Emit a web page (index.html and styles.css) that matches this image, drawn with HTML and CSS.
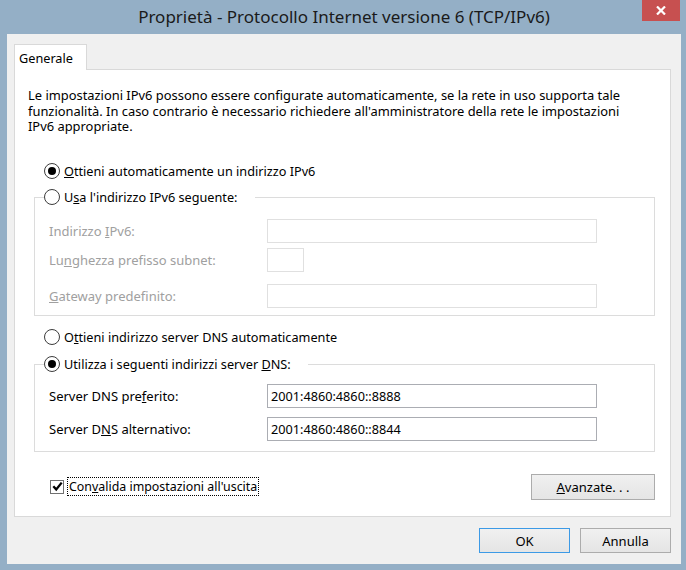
FILE: index.html
```html
<!DOCTYPE html>
<html lang="it">
<head>
  <meta charset="UTF-8">
  <title>Proprietà - Protocollo Internet versione 6 (TCP/IPv6)</title>
  <link rel="stylesheet" href="styles.css">
</head>
<body>

  <div class="window">
    <div class="titlebar">
      <span class="title">Proprietà - Protocollo Internet versione 6 (TCP/IPv6)</span>
      <span class="close">
        <svg width="10" height="9" viewBox="0 0 10 9">
          <path d="M1 0.5 L9 8.5 M9 0.5 L1 8.5" stroke="#fff" stroke-width="2.2" fill="none"/>
        </svg>
      </span>
    </div>

    <div class="client">
      <div class="tabs">
        <span class="tab">Generale</span>
      </div>

      <div class="panel">
        <p class="intro">
          Le impostazioni IPv6 possono essere configurate automaticamente, se la rete in uso supporta tale<br>
          funzionalità. In caso contrario è necessario richiedere all'amministratore della rete le impostazioni<br>
          IPv6 appropriate.
        </p>

        <div class="option option-top">
          <span class="radio checked"></span>
          <span><u>O</u>ttieni automaticamente un indirizzo IPv6</span>
        </div>

        <div class="group group-ip">
          <div class="group-head">
            <span class="radio"></span>
            <span>U<u>s</u>a l'indirizzo IPv6 seguente:</span>
          </div>
          <div class="field field-1">
            <span class="label disabled">Indirizzo <u>I</u>Pv6:</span>
            <span class="input disabled"></span>
          </div>
          <div class="field field-2">
            <span class="label disabled">Lu<u>n</u>ghezza prefisso subnet:</span>
            <span class="input disabled small"></span>
          </div>
          <div class="field field-3">
            <span class="label disabled"><u>G</u>ateway predefinito:</span>
            <span class="input disabled"></span>
          </div>
        </div>

        <div class="option option-dns">
          <span class="radio"></span>
          <span>O<u>t</u>tieni indirizzo server DNS automaticamente</span>
        </div>

        <div class="group group-dns">
          <div class="group-head">
            <span class="radio checked"></span>
            <span>Utilizza i seguenti indirizzi server <u>D</u>NS:</span>
          </div>
          <div class="field field-dns1">
            <span class="label">Server DNS pre<u>f</u>erito:</span>
            <span class="input">2001:4860:4860::8888</span>
          </div>
          <div class="field field-dns2">
            <span class="label">Server D<u>N</u>S alternativo:</span>
            <span class="input">2001:4860:4860::8844</span>
          </div>
        </div>

        <div class="bottom-row">
          <span class="check">
            <span class="box">
              <svg width="11" height="11" viewBox="0 0 11 11">
                <path d="M1.3 5.3 L4.2 8.4 L9.7 1.6" stroke="#000" stroke-width="2.3" fill="none"/>
              </svg>
            </span>
            <span class="check-label">Con<u>v</u>alida impostazioni all'uscita</span>
          </span>
          <button class="btn btn-wide"><u>A</u>vanzate. . .</button>
        </div>
      </div>

      <div class="footer">
        <button class="btn default">OK</button>
        <button class="btn">Annulla</button>
      </div>
    </div>
  </div>

</body>
</html>
```

FILE: styles.css
```css
body {
  margin: 0;
  font-family: "Segoe UI", "Noto Sans", sans-serif;
  font-size: 12.7px;
  color: #000;
}

.window {
  width: 686px;
  height: 570px;
  background-color: #94afc6;
  box-sizing: border-box;
  padding: 0 5px 0 7px;
}

.titlebar {
  position: relative;
  height: 34px;
  display: flex;
  align-items: center;
  justify-content: center;
}

.title {
  font-size: 17px;
  color: #1a1a1a;
  margin-top: -1px;
}

.close {
  position: absolute;
  top: 0;
  right: 1px;
  width: 38px;
  height: 21px;
  background-color: #c75050;
  display: flex;
  align-items: center;
  justify-content: center;
}

.client {
  height: 530px;
  background-color: #f0f0f0;
  box-sizing: border-box;
  padding: 10px 10px 0 7px;
}

.tabs {
  display: flex;
  height: 25px;
}

.tab {
  display: flex;
  align-items: center;
  box-sizing: border-box;
  width: 73px;
  height: 26px;
  padding-left: 4px;
  background: #fff;
  border: 1px solid #d9d9d9;
  border-bottom: none;
  position: relative;
  z-index: 1;
}

.panel {
  background: #fff;
  border: 1px solid #d9d9d9;
  height: 448px;
  box-sizing: border-box;
  padding: 0 15px 0 13px;
}

.intro {
  margin: 18px 0 0;
  font-size: 12.9px;
  line-height: 15.5px;
}

.option,
.group-head {
  display: flex;
  align-items: center;
  height: 16px;
}

.option {
  margin-left: 16px;
}

.option-top {
  margin-top: 28px;
}

.option-dns {
  margin-top: 13px;
}

.radio {
  width: 14px;
  height: 14px;
  border: 1px solid #3c3c3c;
  border-radius: 50%;
  background: #fff;
  margin-right: 4px;
  display: flex;
  align-items: center;
  justify-content: center;
}

.radio.checked::after {
  content: "";
  width: 8px;
  height: 8px;
  border-radius: 50%;
  background: #000;
}

.group {
  border: 1px solid #dcdcdc;
  margin-left: 6px;
  padding-left: 14px;
}

.group-ip {
  margin-top: 18px;
  padding-bottom: 7px;
}

.group-dns {
  margin-top: 19px;
  padding-bottom: 10px;
}

.group-head {
  margin: -9px 0 0 -5px;
  width: max-content;
  padding-right: 17px;
  background: #fff;
}

.field {
  display: flex;
  align-items: center;
}

.field-1 {
  margin-top: 14px;
}

.field-2 {
  margin-top: 5px;
}

.field-3 {
  margin-top: 12px;
}

.field-dns1 {
  margin-top: 12px;
}

.field-dns2 {
  margin-top: 9px;
}

.label {
  width: 218px;
  font-size: 13px;
}

.disabled {
  color: #a0a0a0;
}

.input {
  width: 330px;
  height: 24px;
  box-sizing: border-box;
  border: 1px solid #abadb3;
  padding-left: 3px;
  display: flex;
  align-items: center;
  background: #fff;
  color: #000;
}

.input.disabled {
  border-color: #e0e0e0;
}

.input.small {
  width: 37px;
}

.bottom-row {
  display: flex;
  align-items: center;
  justify-content: space-between;
  margin-top: 22px;
}

.check {
  display: flex;
  align-items: center;
  margin-left: 22px;
}

.box {
  width: 14px;
  height: 14px;
  box-sizing: border-box;
  border: 1px solid #707070;
  background: #fff;
  display: flex;
  align-items: center;
  justify-content: center;
  margin-right: 4px;
}

.check-label {
  outline: 1px dotted #000;
  padding: 0 1px;
  font-size: 12.4px;
  line-height: 17px;
}

.btn {
  font-family: inherit;
  font-size: 13px;
  color: #000;
  width: 91px;
  height: 25px;
  border: 1px solid #acacac;
  background: linear-gradient(#f0f0f0, #e5e5e5);
  padding: 0;
}

.btn-wide {
  width: 124px;
  height: 26px;
}

.btn.default {
  border-color: #3c9ae6;
}

.footer {
  display: flex;
  justify-content: flex-end;
  gap: 10px;
  margin-top: 11px;
}
```
